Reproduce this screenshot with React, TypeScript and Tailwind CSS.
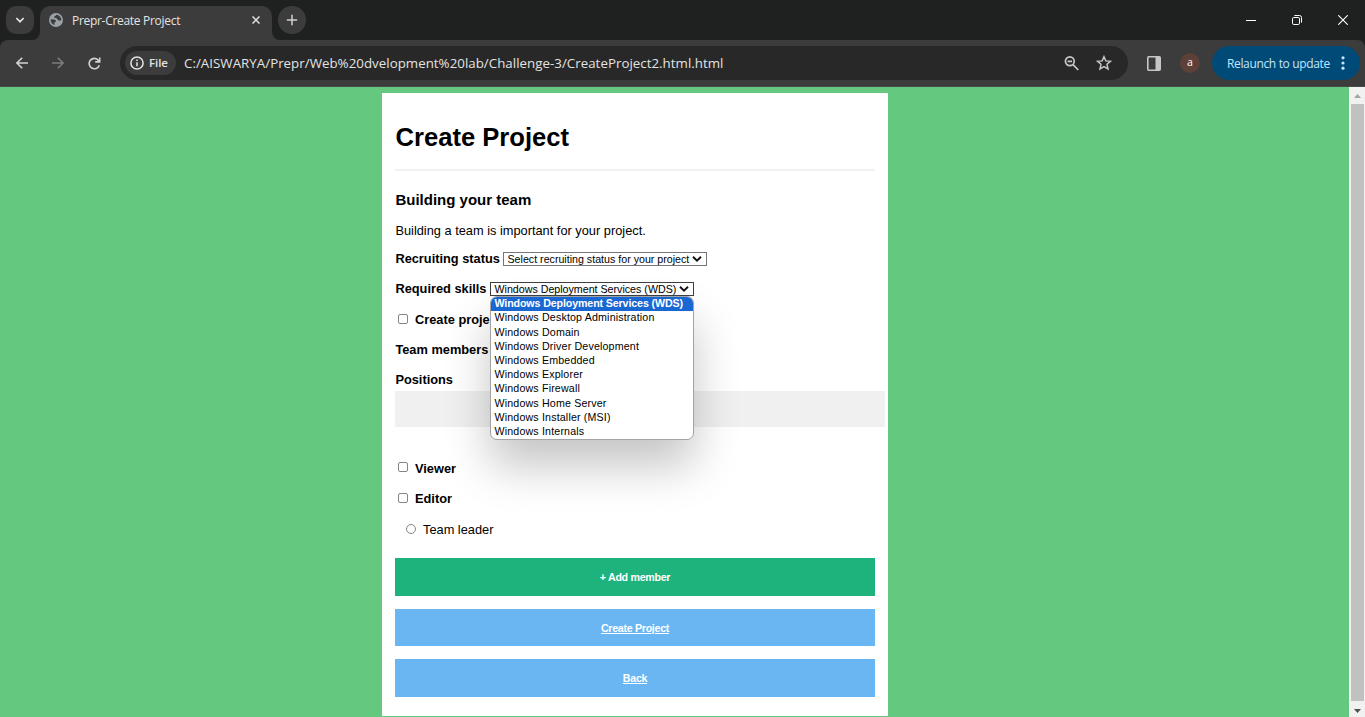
import React from "react";

const SKILLS = [
  "Windows Deployment Services (WDS)",
  "Windows Desktop Administration",
  "Windows Domain",
  "Windows Driver Development",
  "Windows Embedded",
  "Windows Explorer",
  "Windows Firewall",
  "Windows Home Server",
  "Windows Installer (MSI)",
  "Windows Internals",
];

function TabStrip() {
  return (
    <div className="flex h-10 items-start bg-[#1f2120]">
      <button className="ml-1.5 mt-1.5 flex size-7 items-center justify-center rounded-[10px] bg-[#3c3c3c]">
        <svg width="10" height="8" viewBox="0 0 10 8" fill="none" stroke="#e3e3e3" strokeWidth="1.7">
          <path d="M1.3 2 5 5.7 8.700 2" />
        </svg>
      </button>
      <div className="relative ml-1.5 mt-1.5 flex h-[34px] w-[232px] items-center rounded-t-[10px] bg-[#3c3c3c] pb-1.5 pl-[9px]">
        <svg className="absolute -left-2 bottom-0" width="8" height="8" viewBox="0 0 8 8">
          <path d="M8 0V8H0A8 8 0 0 0 8 0Z" fill="#3c3c3c" />
        </svg>
        <svg className="absolute -right-2 bottom-0" width="8" height="8" viewBox="0 0 8 8">
          <path d="M0 0V8H8A8 8 0 0 1 0 0Z" fill="#3c3c3c" />
        </svg>
        <svg width="14" height="14" viewBox="0 0 14 14">
          <circle cx="7" cy="7" r="7" fill="#9aa0a6" />
          <path
            d="M1.700 6.300 4.600 6.400C6 6.400 7 7.100 7 8.100 7 8.900 6.300 9.300 5.500 9.300V12C3 11.500 1.500 9.400 1.700 6.300ZM7 1.700C7 3 6.100 3.300 5.100 3.400 4.900 4.800 5.800 5.100 7 5.100 8.500 5.200 8.300 7.500 10 7.600L12.300 7.600C12.600 4.500 10.300 1.900 7 1.700Z"
            fill="#3c3c3c"
          />
        </svg>
        <span className="ml-[9px] mt-0.5 whitespace-nowrap text-[12px] leading-4 tracking-[-0.3px] text-[#e3e3e3]">
          Prepr-Create Project
        </span>
        <svg className="absolute right-3 top-[10px]" width="8" height="8" viewBox="0 0 8 8" stroke="#e3e3e3" strokeWidth="1.5">
          <path d="M.5.5 7.500 7.500M7.500.5.5 7.500" />
        </svg>
      </div>
      <button className="ml-1.5 mt-1.5 flex size-7 items-center justify-center rounded-full bg-[#3c3c3c]">
        <svg width="12" height="12" viewBox="0 0 12 12" stroke="#d0d0d0" strokeWidth="1.5">
          <path d="M6 .8V11.200M.8 6H11.200" />
        </svg>
      </button>
      <div className="ml-auto flex h-10 items-center">
        <span className="flex w-[46px] justify-center">
          <svg width="10" height="10" viewBox="0 0 10 10">
            <path d="M0 5.500H10" stroke="#fff" />
          </svg>
        </span>
        <span className="flex w-[46px] justify-center">
          <svg width="10" height="10" viewBox="0 0 10 10" fill="none" stroke="#fff">
            <rect x=".5" y="2.500" width="7" height="7" rx="1.300" />
            <path d="M2.400.5H7.500A2 2 0 0 1 9.500 2.500V7.600" />
          </svg>
        </span>
        <span className="flex w-[45px] justify-center">
          <svg width="10" height="10" viewBox="0 0 10 10" stroke="#fff" strokeWidth="1.100">
            <path d="M.2.2 9.800 9.800M9.800.2.2 9.800" />
          </svg>
        </span>
      </div>
    </div>
  );
}

function Toolbar() {
  return (
    <div className="h-[47px] bg-[#1f2120]">
      <div className="flex h-[47px] items-center rounded-t-[8px] border-b border-[#4a4a4a] bg-[#3c3c3c]">
        <svg className="ml-4" width="12" height="12" viewBox="0 0 12 12" fill="none" stroke="#d2d2d2" strokeWidth="1.600">
          <path d="M12 6H1.200M6.200.7.9 6 6.200 11.300" />
        </svg>
        <svg className="ml-6" width="12" height="12" viewBox="0 0 12 12" fill="none" stroke="#7c7c7c" strokeWidth="1.600">
          <path d="M0 6H10.800M5.800.7 11.100 6 5.800 11.300" />
        </svg>
        <svg className="ml-6" width="13" height="13" viewBox="0 0 13 13" fill="none" stroke="#d2d2d2" strokeWidth="1.600">
          <path d="M11.300 8.200A5.200 5.200 0 1 1 10.500 3.400L11.800 4.800M11.700.4V4.900H7.200" />
        </svg>
        <div className="ml-[19px] flex h-[34px] w-[1008px] items-center rounded-full bg-[#282828]">
          <div className="ml-[5px] flex h-6 w-[51px] items-center rounded-full bg-[#3c3c3c] pl-[5px]">
            <svg width="14" height="14" viewBox="0 0 14 14" fill="none" stroke="#e3e3e3" strokeWidth="1.500">
              <circle cx="7" cy="7" r="6.100" />
              <path d="M7 6.200V10.300M7 3.500V5" />
            </svg>
            <span className="ml-[5px] text-[11.5px] font-semibold leading-4 tracking-[-0.1px] text-[#e3e3e3]">File</span>
          </div>
          <span className="ml-2 whitespace-nowrap text-[13.3px] leading-5 tracking-[0.03px] text-[#e3e3e3]">
            C:/AISWARYA/Prepr/Web%20dvelopment%20lab/Challenge-3/CreateProject2.html.html
          </span>
          <svg className="ml-auto" width="15" height="15" viewBox="0 0 15 15" fill="none" stroke="#c7c7c7" strokeWidth="1.700">
            <circle cx="5.800" cy="5.300" r="4.400" />
            <path d="M9 8.700 14.300 14M3.600 5.300H8" />
          </svg>
          <svg className="ml-[17px] mr-4" width="16" height="16" viewBox="0 0 16 16" fill="none" stroke="#c7c7c7" strokeWidth="1.500">
            <path d="M8 1.700 9.800 5.900 14.500 6.300 11 9.300 12 13.900 8 11.500 4 13.900 5 9.300 1.500 6.300 6.200 5.900Z" />
          </svg>
        </div>
        <svg className="ml-[19px]" width="14" height="15" viewBox="0 0 14 15">
          <rect x=".8" y=".8" width="12.400" height="13.400" rx="1" fill="none" stroke="#c7c7c7" strokeWidth="1.600" />
          <path d="M8.500 1H13V14H8.500Z" fill="#c7c7c7" />
        </svg>
        <div className="ml-[19px] flex size-5 items-center justify-center rounded-full bg-[#5d4037] text-[10.5px] leading-none text-white">
          <span className="-mt-px">a</span>
        </div>
        <div className="ml-3 flex h-[34px] w-[148px] items-center rounded-full bg-[#004a77] pl-[15px]">
          <span className="mt-px whitespace-nowrap text-[12px] leading-4 tracking-[-0.35px] text-[#c2e7ff]">Relaunch to update</span>
          <svg className="ml-auto mr-[15px]" width="4" height="14" viewBox="0 0 4 14" fill="#c2e7ff">
            <circle cx="2" cy="1.800" r="1.600" />
            <circle cx="2" cy="7" r="1.600" />
            <circle cx="2" cy="12.200" r="1.600" />
          </svg>
        </div>
      </div>
    </div>
  );
}

function SelectBox({ text, children, dark }: { text: string; children?: React.ReactNode; dark?: boolean }) {
  return (
    <div
      className={
        "relative flex h-[14px] w-[204px] items-center border bg-white pl-[3.5px] text-[10.67px] leading-3 " +
        (dark ? "border-[#3f3f3f]" : "border-[#767676]")
      }
    >
      <span className="whitespace-nowrap">{text}</span>
      <svg className="absolute right-1 top-[3px]" width="10" height="6" viewBox="0 0 10 6" fill="none" stroke="#111" strokeWidth="1.900">
        <path d="M1 .8 5 4.600 9 .8" />
      </svg>
      {children}
    </div>
  );
}

function SkillMenu() {
  return (
    <div className="absolute -left-px top-[13px] z-10 h-[144px] w-[204px] rounded-[7px] border border-[#a3a3a3] bg-white shadow-[0_26px_46px_rgba(0,0,0,0.23)]">
      <ul className="flex h-full flex-col overflow-hidden rounded-[6px]">
        {SKILLS.map((s, i) => (
          <li
            key={s}
            className={
              "flex h-[14.2px] shrink-0 items-center whitespace-nowrap pb-[1.8px] pl-[3.5px] text-[10.67px] leading-3 " +
              (i === 0
                ? "bg-[#1967d2] font-bold tracking-[-0.12px] text-white"
                : "tracking-[0.16px] text-black")
            }
          >
            {s}
          </li>
        ))}
      </ul>
    </div>
  );
}

function Check() {
  return <span className="ml-[3px] mr-[7px] size-[10px] rounded-[2px] border border-[#858585] bg-white" />;
}

export default function App() {
  return (
    <div className="flex h-[717px] w-[1365px] flex-col overflow-hidden font-['Open_Sans',sans-serif]">
      <TabStrip />
      <Toolbar />
      <div className="flex h-[630px] bg-[#64c87e]">
        <main className="ml-[382px] mt-1.5 h-[623px] w-[506px] bg-white px-[13px] pt-7 font-['Liberation_Sans',Arial,sans-serif] text-[12.8px] text-black">
          <h1 className="h-8 pl-[0.5px] text-[25.6px] font-bold leading-8">Create Project</h1>
          <div className="mt-4 h-0.5 bg-[#f1f1f1]" />
          <h2 className="mt-3.5 h-[30px] pl-[0.4px] text-[15px] font-bold leading-[30px]">Building your team</h2>
          <p className="h-[30px] whitespace-nowrap pl-[0.4px] leading-[32px]">Building a team is important for your project.</p>
          <div className="flex h-[28px] items-center">
            <b className="w-[108px] shrink-0 whitespace-nowrap pl-[0.4px]">Recruiting status</b>
            <SelectBox text="Select recruiting status for your project" />
          </div>
          <div className="flex h-[30px] items-center pt-0.5">
            <b className="w-[95px] shrink-0 whitespace-nowrap pl-[0.4px]">Required skills</b>
            <SelectBox text="Windows Deployment Services (WDS)" dark>
              <SkillMenu />
            </SelectBox>
          </div>
          <div className="flex h-[31px] items-center">
            <Check />
            <b className="mt-0.5 whitespace-nowrap">Create project</b>
          </div>
          <div className="flex h-[30px] items-center pl-[0.4px] pt-0.5">
            <b>Team members</b>
          </div>
          <div className="flex h-[27px] items-center pl-[0.4px] pt-[5px]">
            <b>Positions</b>
          </div>
          <div className="h-9 w-[490px] bg-[#f0f0f0]" />
          <div className="mt-[26px] flex h-[30px] items-center">
            <span className="mb-0.5 flex">
              <Check />
            </span>
            <b className="mt-0.5">Viewer</b>
          </div>
          <div className="flex h-[30px] items-center">
            <Check />
            <b className="mt-0.5">Editor</b>
          </div>
          <div className="flex h-[32px] items-center">
            <span className="ml-[11px] mr-[7px] size-[10px] rounded-full border border-[#858585] bg-white" />
            <span className="mt-0.5">Team leader</span>
          </div>
          <div className="mt-[13px] flex flex-col gap-[13px] text-[10.67px] font-bold tracking-[-0.3px] text-white">
            <button className="h-[38px] bg-[#1eb27c]">+ Add member</button>
            <button className="h-[37px] bg-[#69b6f3] underline">Create Project</button>
            <button className="h-[38px] bg-[#69b6f3] underline">Back</button>
          </div>
        </main>
        <div className="ml-auto flex w-4 flex-col items-center bg-[#f1f1f1]">
          <svg className="mt-[7px]" width="7" height="4" viewBox="0 0 7 4" fill="#a3a3a3">
            <path d="M3.500 0 7 4H0Z" />
          </svg>
          <div className="mt-[6px] h-[597px] w-[13px] bg-[#c1c1c1]" />
          <svg className="mt-2" width="7" height="4" viewBox="0 0 7 4" fill="#505050">
            <path d="M0 0H7L3.500 4Z" />
          </svg>
        </div>
      </div>
    </div>
  );
}
